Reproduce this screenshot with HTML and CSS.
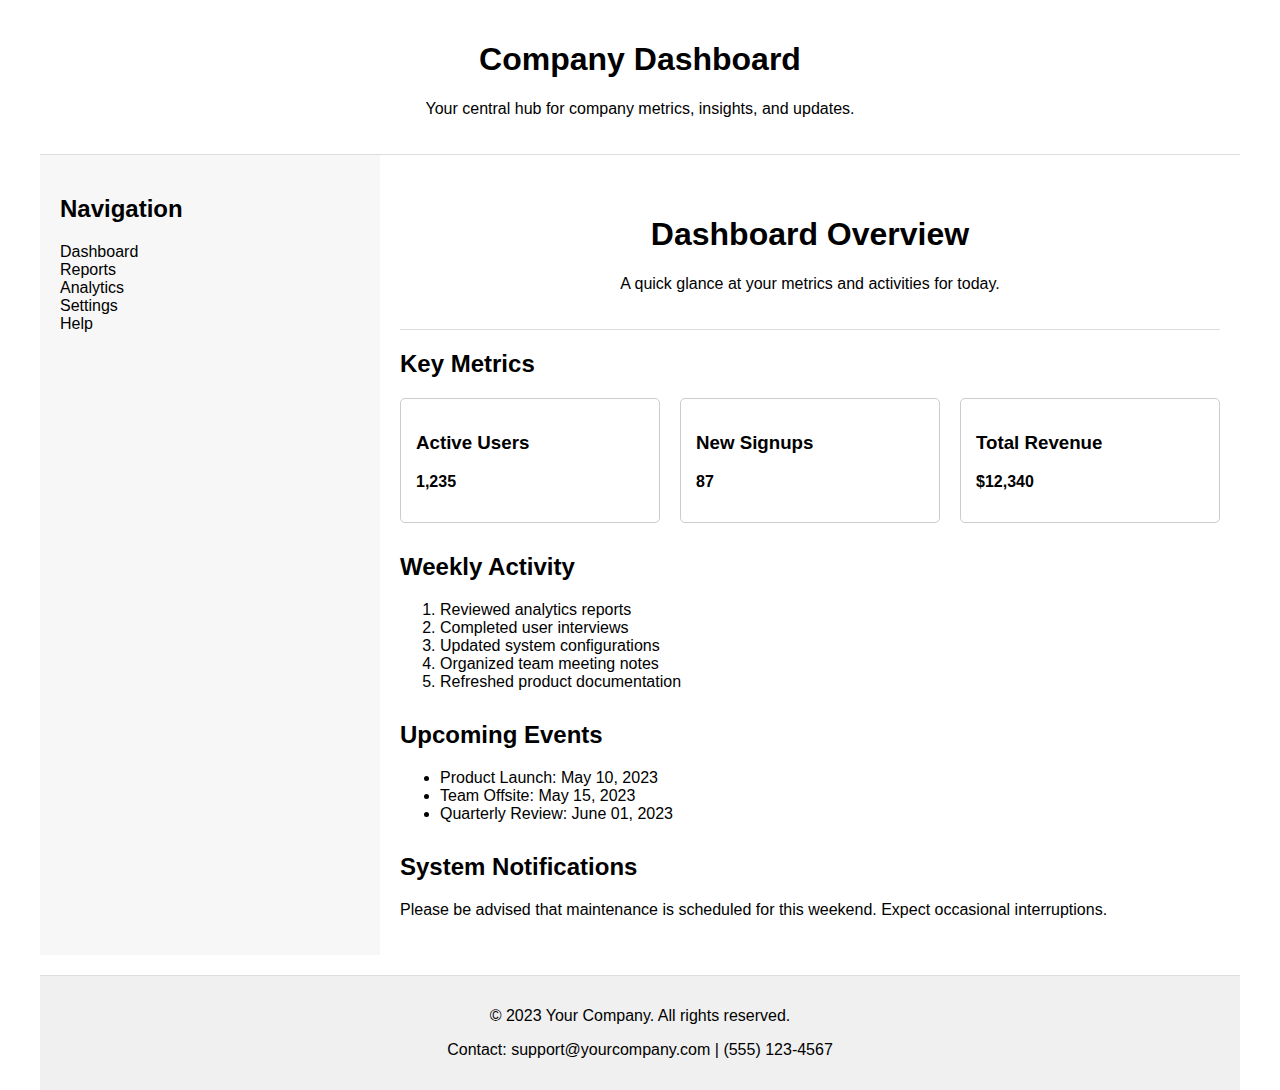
FILE: index.html
```html
<!DOCTYPE html>
<html lang="en">
<head>
<meta charset="utf-8">
<title>Company Dashboard</title>
<link rel="stylesheet" href="styles.css">
</head>
<body>
<header class="site-header">
  <h1>Company Dashboard</h1>
  <p>Your central hub for company metrics, insights, and updates.</p>
</header>
<div class="layout">
  <aside class="sidebar">
    <h2>Navigation</h2>
    <ul class="nav-list">
      <li>Dashboard</li>
      <li>Reports</li>
      <li>Analytics</li>
      <li>Settings</li>
      <li>Help</li>
    </ul>
  </aside>
  <main class="content">
    <section class="hero">
      <h1>Dashboard Overview</h1>
      <p>A quick glance at your metrics and activities for today.</p>
    </section>
    <section class="block">
      <h2>Key Metrics</h2>
      <div class="metrics">
        <div class="card"><h3>Active Users</h3><p>1,235</p></div>
        <div class="card"><h3>New Signups</h3><p>87</p></div>
        <div class="card"><h3>Total Revenue</h3><p>$12,340</p></div>
      </div>
    </section>
    <section class="block">
      <h2>Weekly Activity</h2>
      <ol class="list">
        <li>Reviewed analytics reports</li>
        <li>Completed user interviews</li>
        <li>Updated system configurations</li>
        <li>Organized team meeting notes</li>
        <li>Refreshed product documentation</li>
      </ol>
    </section>
    <section class="block">
      <h2>Upcoming Events</h2>
      <ul class="list">
        <li>Product Launch: May 10, 2023</li>
        <li>Team Offsite: May 15, 2023</li>
        <li>Quarterly Review: June 01, 2023</li>
      </ul>
    </section>
    <section class="block">
      <h2>System Notifications</h2>
      <p>Please be advised that maintenance is scheduled for this weekend. Expect occasional interruptions.</p>
    </section>
  </main>
</div>
<footer class="site-footer">
  <p>&copy; 2023 Your Company. All rights reserved.</p>
  <p>Contact: support@yourcompany.com | (555) 123-4567</p>
</footer>
</body>
</html>
```

FILE: styles.css
```css
html, body {
  margin: 0;
  padding: 0;
}
body {
  font-family: "Liberation Sans", Arial, sans-serif;
  font-size: 16px;
  color: #000;
  background: #fff;
  padding: 0 40px;
}
.site-header {
  text-align: center;
  padding: 20px;
  border-bottom: 1px solid #ddd;
}
.site-header h1 {
  font-size: 32px;
  margin: 21.44px 0;
}
.site-header p {
  margin: 16px 0;
}
.layout {
  display: flex;
  margin-bottom: 20px;
}
.sidebar {
  width: 340px;
  flex: 0 0 340px;
  box-sizing: border-box;
  background: #f7f7f7;
  padding: 20px;
}
.sidebar h2 {
  font-size: 24px;
  margin: 19.92px 0;
}
.nav-list {
  list-style: none;
  margin: 0;
  padding: 0;
}
.content {
  flex: 1;
  padding: 20px;
}
.hero {
  text-align: center;
  padding: 20px 0;
  border-bottom: 1px solid #ddd;
  margin-bottom: 20px;
}
.hero h1 {
  font-size: 32px;
  margin: 21.44px 0;
}
.hero p {
  margin: 16px 0;
}
.block h2 {
  font-size: 24px;
  margin: 19.92px 0;
}
.block + .block {
  margin-top: 30px;
}
.block p {
  margin: 16px 0;
}
.metrics {
  display: grid;
  grid-template-columns: repeat(3, 1fr);
  gap: 20px;
}
.card {
  border: 1px solid #ccc;
  border-radius: 5px;
  padding: 15px;
}
.card h3 {
  font-size: 18.72px;
  margin: 18.72px 0;
}
.card p {
  font-weight: bold;
  margin: 16px 0;
}
.list {
  margin: 16px 0;
  padding-left: 40px;
}
.site-footer {
  background: #f0f0f0;
  border-top: 1px solid #ddd;
  text-align: center;
  padding: 15px 20px;
}
.site-footer p {
  margin: 16px 0;
}
```
